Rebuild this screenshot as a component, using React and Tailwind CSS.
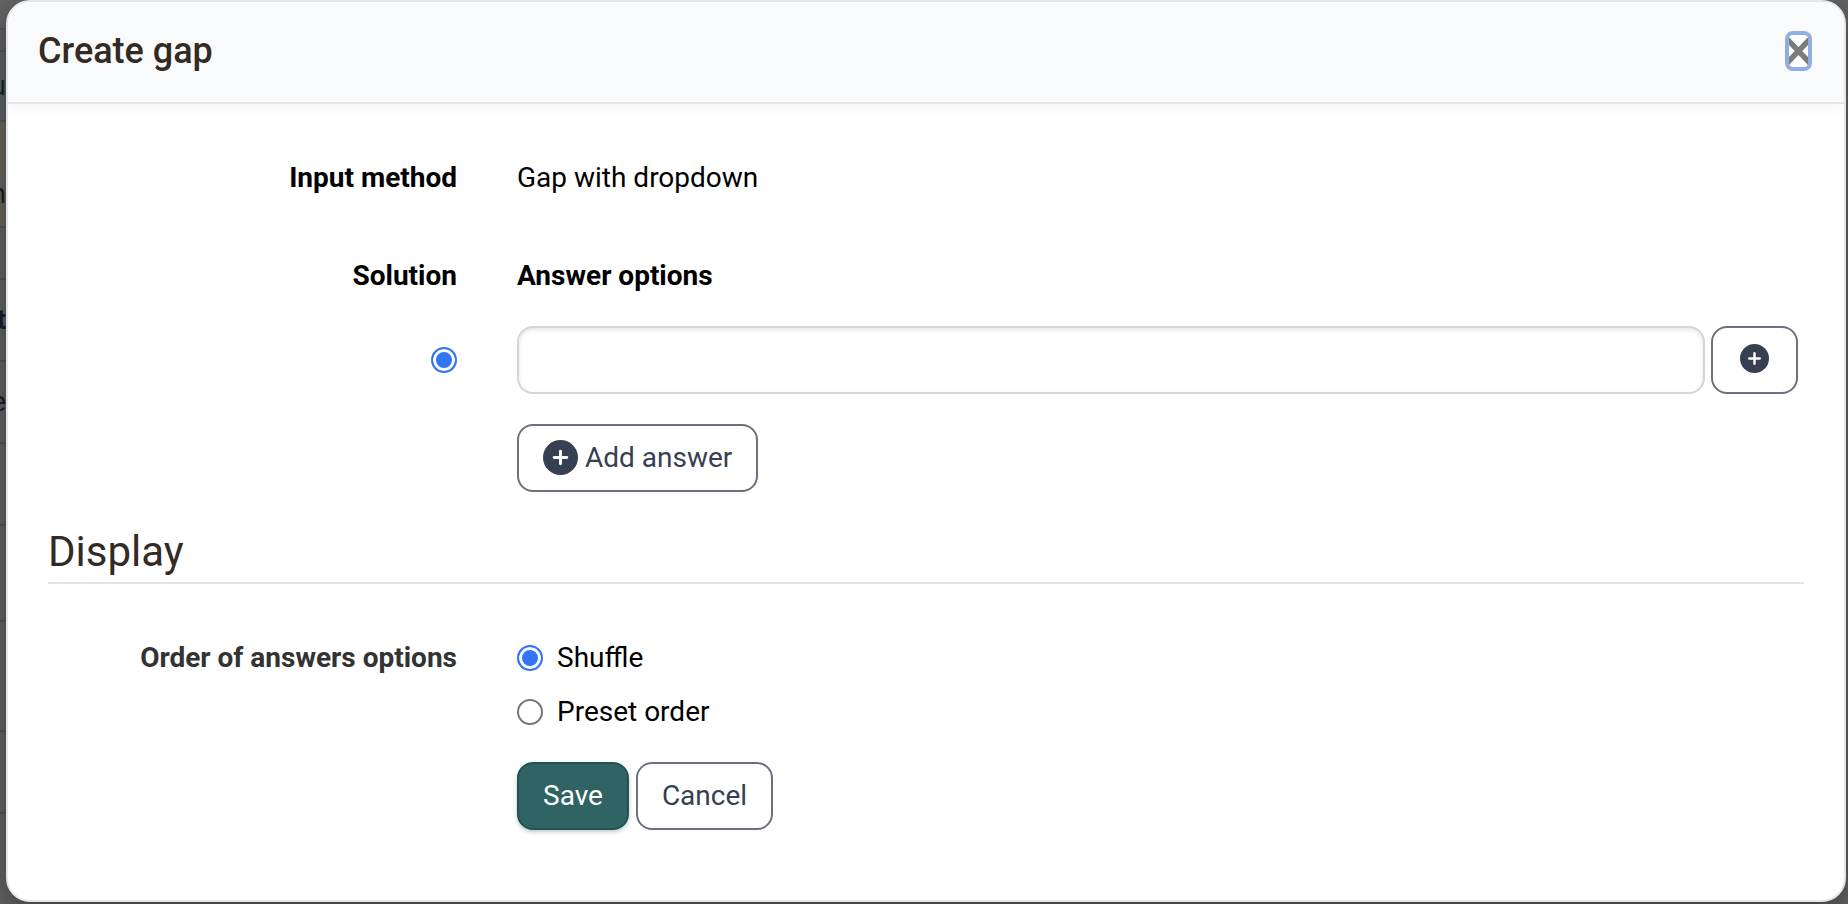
import React, { useState } from "react";

// dimmed page that shows around the dialog
const rows = [
  { h: "h-[30px]", text: "" },
  { h: "h-[22px]", text: "" },
  { h: "h-[70px]", text: "u", style: "items-center text-[#132a2a] bg-[#606464]" },
  { h: "h-[106px]", text: "n", style: "items-end pb-3 text-[#1c2029] bg-[#6b675f]" },
  { h: "h-[52px]", text: "" },
  { h: "h-[82px]", text: "t", style: "items-center text-[#1c2029] font-bold" },
  { h: "h-[82px]", text: "e", style: "items-center text-[#1c2029]" },
  { h: "h-[82px]", text: "" },
  { h: "h-[96px]", text: "" },
  { h: "h-[110px]", text: "" },
  { h: "h-[82px]", text: "" },
];

const button =
  "flex items-center justify-center h-[68px] px-6 border-2 rounded-2xl text-[28px] leading-10";
const outline = "bg-white border-[#6b727d] text-[#374053]";
const radio =
  "appearance-none shrink-0 size-[26px] rounded-full border-2 border-[#767676] bg-white checked:border-[#3375f6] checked:bg-[#3375f6] checked:shadow-[inset_0_0_0_3px_white]";

function PlusCircle({ className }) {
  return (
    <svg className={className} viewBox="0 0 36 36" aria-hidden="true">
      <circle cx="18" cy="18" r="18" fill="#374053" />
      <path d="M18 11.5v13M11.5 18h13" stroke="white" strokeWidth="3" strokeLinecap="round" />
    </svg>
  );
}

function Row({ label, children, className = "" }) {
  return (
    <div className={`grid grid-cols-4 ${className}`}>
      <div className="px-[30px] text-right font-bold">{label}</div>
      <div className="col-span-3 px-[30px]">{children}</div>
    </div>
  );
}

function App() {
  const [answer, setAnswer] = useState("");
  const [order, setOrder] = useState("shuffle");

  return (
    <div className="relative min-h-screen bg-[#646464] pl-1.5 pr-0.5 pb-0.5 flex font-[Roboto,sans-serif] text-[28px] leading-10 text-black overflow-hidden">
      <div className="absolute inset-y-0 left-0 w-1.5 overflow-hidden" aria-hidden="true">
        {rows.map((r, i) => (
          <div
            key={i}
            className={`flex justify-end border-b-2 border-[#565656] ${r.h} ${r.style || ""}`}
          >
            {r.text}
          </div>
        ))}
      </div>

      <div
        role="dialog"
        aria-labelledby="dialog-title"
        className="relative flex-1 bg-white border-2 border-[#e5e5ec] rounded-3xl overflow-hidden shadow-[0_10px_30px_rgba(0,0,0,0.4)]"
      >
        <header className="flex items-center justify-between h-[102px] pl-[30px] pr-8 pb-0.5 bg-[#f9fafc] border-b-2 border-[#e5e5e5] shadow-[0_4px_16px_rgba(0,0,0,0.04)]">
          <h1 id="dialog-title" className="text-4xl font-medium text-[#332b23]">
            Create gap
          </h1>
          <button
            type="button"
            aria-label="Close"
            className="flex items-center justify-center w-[27px] h-10 rounded-lg border-4 border-[#92ade2] bg-white"
          >
            <svg className="w-[19px] h-[27px] shrink-0" viewBox="0 0 19 27" aria-hidden="true">
              <path d="M-2 1L21 25M21 1L-2 25" stroke="#7c7c7c" strokeWidth="5.5" />
            </svg>
          </button>
        </header>

        <form className="pl-8 pr-4 pt-[54px]" onSubmit={(e) => e.preventDefault()}>
          <Row label="Input method">Gap with dropdown</Row>

          <Row label="Solution" className="mt-[58px]">
            <strong>Answer options</strong>
          </Row>

          <Row
            className="mt-[30px] items-center"
            label={
              <input
                type="radio"
                name="solution"
                aria-label="Correct answer"
                defaultChecked
                className={`${radio} block ml-auto`}
              />
            }
          >
            <div className="flex gap-1.5">
              <input
                type="text"
                aria-label="Answer"
                value={answer}
                onChange={(e) => setAnswer(e.target.value)}
                className="flex-1 h-[68px] px-6 border-2 border-[#d1d6dc] rounded-2xl shadow-[inset_0_2px_4px_rgba(0,0,0,0.1)] outline-none"
              />
              <button type="button" aria-label="Add" className={`${button} ${outline} w-[87px]`}>
                <PlusCircle className="size-[29px] mb-1" />
              </button>
            </div>
          </Row>

          <Row className="mt-[30px]">
            <button type="button" className={`${button} ${outline} gap-[7px]`}>
              <PlusCircle className="size-[35px] mb-0.5" />
              <span>Add answer</span>
            </button>
          </Row>

          <h2 className="ml-2 mr-6 mt-[34px] pb-1 border-b-2 border-[#e5e5e5] text-[42px] leading-[52px] text-[#332b23]">
            Display
          </h2>

          <Row
            className="mt-[54px]"
            label={<span className="text-[#333333]">Order of answers options</span>}
          >
            <div className="flex flex-col gap-3.5" role="radiogroup" aria-label="Order of answers options">
              <label className="flex items-center gap-3.5">
                <input
                  type="radio"
                  name="order"
                  checked={order === "shuffle"}
                  onChange={() => setOrder("shuffle")}
                  className={radio}
                />
                Shuffle
              </label>
              <label className="flex items-center gap-3.5">
                <input
                  type="radio"
                  name="order"
                  checked={order === "preset"}
                  onChange={() => setOrder("preset")}
                  className={radio}
                />
                Preset order
              </label>
            </div>
          </Row>

          <Row className="mt-[30px] pb-[70px]">
            <div className="flex gap-[7px]">
              <button
                type="submit"
                className={`${button} bg-[#306364] border-[#265152] text-white shadow-[0_2px_4px_rgba(48,99,100,0.35)]`}
              >
                Save
              </button>
              <button type="button" className={`${button} ${outline}`}>
                Cancel
              </button>
            </div>
          </Row>
        </form>
      </div>
    </div>
  );
}

export default App;
